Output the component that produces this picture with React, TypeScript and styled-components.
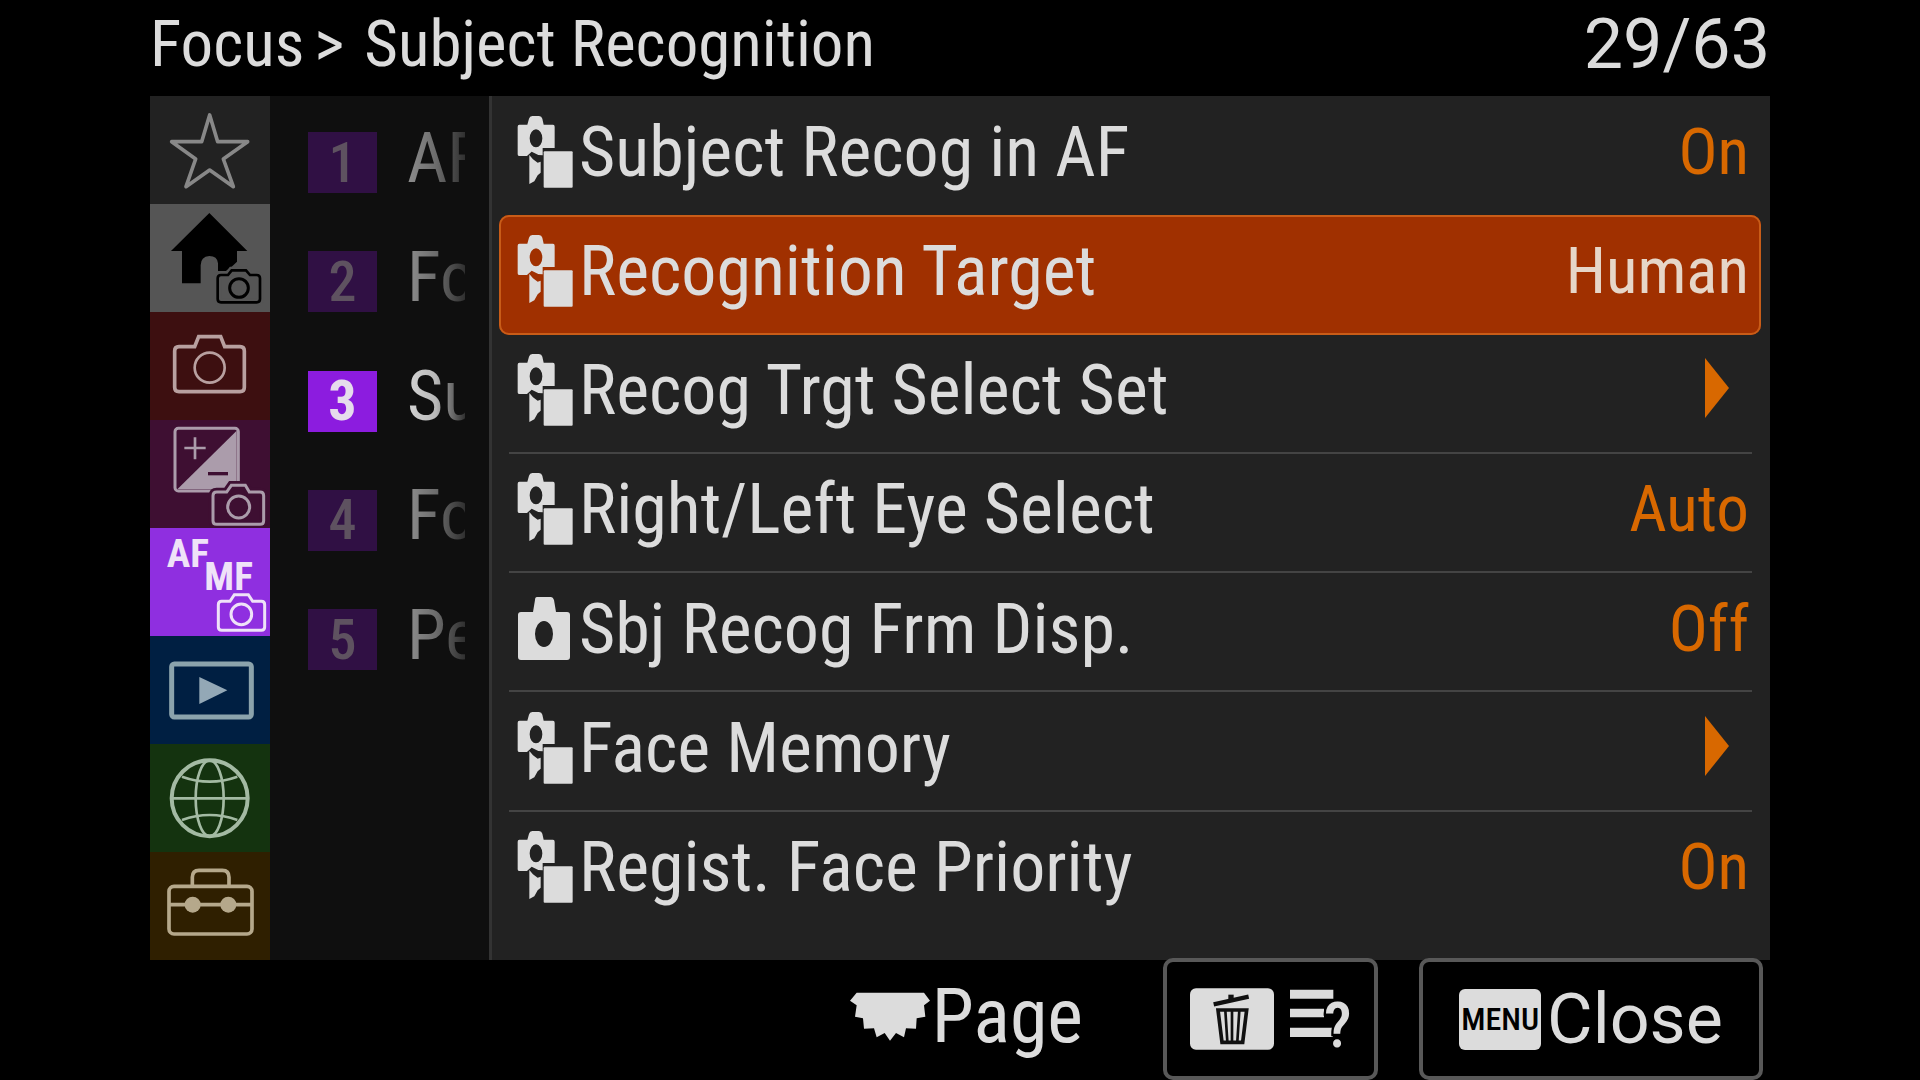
import React, { useState } from "react";
import styled, { createGlobalStyle, css } from "styled-components";

const color = {
  text: "#dcdcdc",
  accent: "#d86800",
  panel: "#222222",
  column: "#0f0f0f",
  rule: "#444444",
  frame: "#585858",
};

const GlobalStyle = createGlobalStyle`
  *, *::before, *::after { box-sizing: border-box; }
  body { margin: 0; background: #000; }
  button { margin: 0; padding: 0; border: 0; background: none; color: inherit; font: inherit; text-align: left; cursor: pointer; }
  ul, ol { margin: 0; padding: 0; list-style: none; }
  svg { display: block; flex: none; }
`;

const Screen = styled.div`
  display: flex;
  flex-direction: column;
  min-height: 100vh;
  padding: 0 150px;
  overflow: hidden;
  background: #000;
  color: ${color.text};
  font-family: "Roboto Condensed", Roboto, "Liberation Sans", sans-serif;
  font-size: 70px;
  line-height: 80px;
`;

const Header = styled.header`
  display: flex;
  align-items: center;
  justify-content: space-between;
  height: 96px;
  padding-bottom: 8px;
`;

const Crumbs = styled.h1`
  display: flex;
  align-items: center;
  margin: 0;
  font-size: 65px;
  font-weight: 400;
  white-space: nowrap;
`;

const Chevron = styled.span`
  padding: 0 20px 0 10px;
`;

const Counter = styled.span`
  font-family: Roboto, sans-serif;
  font-size: 70px;
`;

const Main = styled.main`
  display: flex;
  flex: 1;
`;

const Categories = styled.nav`
  display: flex;
  flex-direction: column;
  flex: none;
  width: 120px;
`;

const Category = styled.button<{ $bg: string }>`
  display: flex;
  flex: 1;
  background: ${(p) => p.$bg};
  svg { width: 100%; height: 108px; }
`;

const Groups = styled.ol`
  display: grid;
  grid-template-rows: repeat(7, 1fr);
  flex: none;
  width: 219px;
  padding: 7px 0 22px 38px;
  background: ${color.column};
`;

const Group = styled.button`
  display: flex;
  align-items: center;
  gap: 30px;
  width: 100%;
  height: 100%;
`;

const Badge = styled.span<{ $active: boolean }>`
  display: grid;
  place-items: center;
  width: 69px;
  height: 61px;
  font-size: 56px;
  line-height: 60px;
  font-weight: ${(p) => (p.$active ? 700 : 500)};
  color: ${(p) => (p.$active ? "#e6dcec" : "#5e5260")};
  background: ${(p) => (p.$active ? "#8c1cdf" : "#301044")};
`;

const GroupName = styled.span<{ $active: boolean }>`
  width: 58px;
  padding-bottom: 10px;
  overflow: hidden;
  color: transparent;
  background: linear-gradient(90deg, ${(p) => (p.$active ? "#d4d4d4, #b8b8b8 50%" : "#8e8e8e, #6c6c6c 50%")}, #303030 100%);
  background-clip: text;
`;

const Settings = styled.ul`
  display: flex;
  flex-direction: column;
  flex: 1;
  min-width: 0;
  padding: 0 9px 29px 7px;
  border-left: 3px solid #333;
  background: ${color.panel};
`;

const Item = styled.li<{ $selected: boolean; $rule: boolean }>`
  display: flex;
  flex: 1;
  ${(p) =>
    p.$selected
      ? css`
          border-radius: 10px;
          background: #a03000;
          box-shadow: inset 0 0 0 2px #c85c18;
          padding: 0 12px 2px 18px;
        `
      : css`
          margin: 0 9px 0 10px;
          padding: 0 3px 0 8px;
          border: solid ${p.$rule ? color.rule : "transparent"};
          border-width: 0 0 2px;
        `}
`;

const ItemButton = styled.button`
  display: flex;
  align-items: center;
  gap: 6px;
  width: 100%;
  padding-bottom: 6px;
`;

const Label = styled.span`
  flex: 1;
  white-space: nowrap;
`;

const Value = styled.span<{ $selected: boolean }>`
  font-size: 65px;
  color: ${(p) => (p.$selected ? "#e6d6c8" : color.accent)};
`;

const Arrow = styled.svg`
  width: 24px;
  height: 60px;
  margin: 0 20px 4px 0;
  fill: ${color.accent};
`;

const Footer = styled.footer`
  display: flex;
  align-items: stretch;
  justify-content: flex-end;
  height: 122px;
  margin-top: -2px;
  padding-right: 7px;
  font-size: 76px;
`;

const Page = styled.div`
  display: flex;
  align-items: center;
  gap: 2px;
  margin-right: 80px;
  padding-bottom: 6px;
`;

const FooterButton = styled.button<{ $wide?: boolean }>`
  display: flex;
  align-items: center;
  justify-content: center;
  gap: ${(p) => (p.$wide ? 6 : 16)}px;
  width: ${(p) => (p.$wide ? 344 : 215)}px;
  margin-left: ${(p) => (p.$wide ? 41 : 0)}px;
  border: 4px solid ${color.frame};
  border-radius: 10px;
  background: #000;
`;

const MenuKey = styled.span`
  display: grid;
  place-items: center;
  width: 82px;
  height: 61px;
  border-radius: 6px;
  background: ${color.text};
  color: #000;
  font-size: 32px;
  line-height: 60px;
  font-weight: 500;
`;

const CloseText = styled.span`
  font-family: Roboto, sans-serif;
  font-size: 70px;
`;

const StarIcon = () => (
  <svg viewBox="30 18 360 324" fill="none" stroke="#888" strokeWidth="11" strokeLinejoin="round" aria-hidden="true">
    <path d="M209 75 L233 155 H323 L250 207 L280 290 L209 240 L138 290 L167 207 L95 155 H185 Z" />
  </svg>
);

const HomeIcon = () => (
  <svg viewBox="30 342 360 324" aria-hidden="true">
    <path d="M208 369 L322 483 H291 V515 L275 530 L258 543 H234 V520 Q232 498 208 498 Q182 500 182 526 V580 H126 V483 H93 Z" fill="#000" />
    <path d="M243 555 H264 L275 541 H318 L330 555 H350 Q360 555 360 565 V627 Q360 637 350 637 H243 Q233 637 233 627 V565 Q233 555 243 555 Z" fill="#555" stroke="#555" strokeWidth="22" />
    <path d="M243 555 H264 L275 541 H318 L330 555 H350 Q360 555 360 565 V627 Q360 637 350 637 H243 Q233 637 233 627 V565 Q233 555 243 555 Z" fill="none" stroke="#000" strokeWidth="8" />
    <circle cx="297" cy="594" r="28" fill="none" stroke="#000" strokeWidth="9" />
  </svg>
);

const CameraIcon = () => (
  <svg viewBox="30 666 360 324" fill="none" stroke="#b8a0a0" strokeWidth="11" aria-hidden="true">
    <path d="M117 770 H164 L176 740 H242 L254 770 H300 Q313 770 313 783 V892 Q313 905 300 905 H117 Q104 905 104 892 V783 Q104 770 117 770 Z" />
    <circle cx="209" cy="833" r="45" strokeWidth="8" />
  </svg>
);

const ExposureIcon = () => (
  <svg viewBox="30 30 360 324" fill="none" stroke="#ab9cab" strokeWidth="9" aria-hidden="true">
    <rect x="105" y="55" width="190" height="188" rx="10" />
    <path d="M290 62 V238 H112 Z" fill="#ab9cab" stroke="none" />
    <path d="M133 114 H197 M165 82 V148" strokeWidth="8" />
    <path d="M204 191 H264" stroke="#3e0f32" strokeWidth="10" />
    <path d="M230 246 H260 L274 226 H316 L328 246 H360 Q371 246 371 257 V332 Q371 343 360 343 H230 Q219 343 219 332 V257 Q219 246 230 246 Z" fill="#3e0f32" stroke="#3e0f32" strokeWidth="26" />
    <path d="M230 246 H260 L274 226 H316 L328 246 H360 Q371 246 371 257 V332 Q371 343 360 343 H230 Q219 343 219 332 V257 Q219 246 230 246 Z" strokeWidth="9" />
    <circle cx="296" cy="291" r="33" />
  </svg>
);

const FocusIcon = () => (
  <svg viewBox="30 354 360 324" aria-hidden="true">
    <g fill="#efe2f8" fontWeight="700" fontSize="118">
      <text x="80" y="470">AF</text>
      <text x="193" y="539">MF</text>
    </g>
    <g fill="none" stroke="#efe2f8" strokeWidth="9">
      <path d="M245 574 H270 L283 554 H325 L338 574 H364 Q374 574 374 584 V651 Q374 661 364 661 H245 Q235 661 235 651 V584 Q235 574 245 574 Z" />
      <circle cx="304" cy="613" r="31" />
    </g>
  </svg>
);

const PlaybackIcon = () => (
  <svg viewBox="30 18 360 324" aria-hidden="true">
    <rect x="95" y="102" width="239" height="159" rx="8" fill="none" stroke="#8ba3ac" strokeWidth="15" />
    <path d="M178 141 L262 181 L178 222 Z" fill="#93a8b6" />
  </svg>
);

const NetworkIcon = () => (
  <svg viewBox="30 342 360 324" fill="none" stroke="#a3baa3" strokeWidth="8" aria-hidden="true">
    <circle cx="209" cy="505" r="114" strokeWidth="12" />
    <ellipse cx="209" cy="505" rx="42" ry="114" />
    <path d="M94 505 H324 M126 440 Q209 470 292 440 M126 570 Q209 540 292 570" />
  </svg>
);

const ToolboxIcon = () => (
  <svg viewBox="30 666 360 324" fill="none" stroke="#b5a88b" strokeWidth="11" aria-hidden="true">
    <rect x="87" y="769" width="249" height="143" rx="15" />
    <path d="M157 769 V742 Q157 721 177 721 H247 Q267 721 267 742 V769 M87 824 H336" />
    <g fill="#b5a88b" stroke="none">
      <circle cx="158" cy="824" r="24" />
      <circle cx="265" cy="824" r="24" />
    </g>
  </svg>
);

const StillMovieIcon = () => (
  <svg width="56" height="72" viewBox="20 20 168 216" fill={color.text} aria-hidden="true">
    <path
      fillRule="evenodd"
      d="M66 20 H86 Q94 20 96 28 L100 46 H128 Q133 46 133 52 V116 H97 V138 L84 137 L64 127 L50 140 H26 Q22 140 22 135 V52 Q22 46 27 46 H51 L56 28 Q58 20 66 20 Z M77 60 A19 27 0 1 0 77 114 A19 27 0 1 0 77 60 Z"
    />
    <path d="M57 137 L68 150 L82 160 L91 157 V190 L82 198 L72 216 L57 224 Z" />
    <rect x="100" y="126" width="87" height="109" rx="3" />
  </svg>
);

const StillIcon = () => (
  <svg width="56" height="64" viewBox="0 0 56 64" fill={color.text} aria-hidden="true">
    <path
      fillRule="evenodd"
      d="M20 0 H34 Q36 0 37 3 L39 15 H50 Q53 15 53 18 V60 Q53 63 50 63 H4 Q1 63 1 60 V18 Q1 15 4 15 H16 L18 3 Q18 0 20 0 Z M27 24 A9 13 0 1 0 27 50 A9 13 0 1 0 27 24 Z"
    />
  </svg>
);

const DialIcon = () => (
  <svg width="80" height="49" viewBox="16 34 240 147" fill={color.text} aria-hidden="true">
    <path d="M36 36 H238 L256 60 L238 74 L242 108 L216 113 L214 144 L184 143 L178 170 L154 157 L136 180 L120 157 L96 170 L88 143 L58 144 L55 113 L31 108 L36 74 L16 60 Z" />
  </svg>
);

const TrashKeyIcon = () => (
  <svg width="84" height="62" viewBox="22 23 252 186" aria-hidden="true">
    <rect x="22" y="24" width="252" height="184" rx="18" fill={color.text} />
    <g fill="none" stroke="#111">
      <path d="M93 72 L198 49" strokeWidth="13" />
      <path d="M145 60 V43" strokeWidth="16" />
      <path d="M106 89 H192 L180 186 H118 Z" strokeWidth="11" />
      <path d="M128 90 L134 184 M148 90 V184 M170 90 L164 184" strokeWidth="8" />
    </g>
  </svg>
);

const HelpListIcon = () => (
  <svg width="62" height="60" viewBox="320 34 186 180" aria-hidden="true">
    <path d="M320 36 H450 V63 H320 Z M320 93 H422 V119 H320 Z M320 150 H448 V178 H320 Z" fill={color.text} />
    <text x="422" y="208" fontSize="190" fontWeight="500" fill={color.text} stroke="#000" strokeWidth="14" paintOrder="stroke">?</text>
  </svg>
);

const categories = [
  { name: "My Menu", bg: "#222222", Icon: StarIcon },
  { name: "Main", bg: "#555555", Icon: HomeIcon },
  { name: "Shooting", bg: "#3d0f10", Icon: CameraIcon },
  { name: "Exposure/Color", bg: "#3e0f32", Icon: ExposureIcon },
  { name: "Focus", bg: "#8f2fe0", Icon: FocusIcon },
  { name: "Playback", bg: "#001f42", Icon: PlaybackIcon },
  { name: "Network", bg: "#14330f", Icon: NetworkIcon },
  { name: "Setup", bg: "#2f1f00", Icon: ToolboxIcon },
];

const groups = ["AF", "Fo", "Su", "Fo", "Pe"];

const settings = [
  { label: "Subject Recog in AF", value: "On" },
  { label: "Recognition Target", value: "Human" },
  { label: "Recog Trgt Select Set" },
  { label: "Right/Left Eye Select", value: "Auto" },
  { label: "Sbj Recog Frm Disp.", value: "Off", still: true },
  { label: "Face Memory" },
  { label: "Regist. Face Priority", value: "On" },
];

export default function App() {
  const [selected, setSelected] = useState(1);
  const [group, setGroup] = useState(2);

  return (
    <>
      <GlobalStyle />
      <Screen>
        <Header>
          <Crumbs>
            Focus<Chevron>&gt;</Chevron>Subject Recognition
          </Crumbs>
          <Counter>29/63</Counter>
        </Header>
        <Main>
          <Categories aria-label="Menu tabs">
            {categories.map(({ name, bg, Icon }) => (
              <Category key={name} $bg={bg} aria-label={name}>
                <Icon />
              </Category>
            ))}
          </Categories>
          <Groups>
            {groups.map((name, i) => (
              <li key={i}>
                <Group onClick={() => setGroup(i)}>
                  <Badge $active={i === group}>{i + 1}</Badge>
                  <GroupName $active={i === group}>{name}</GroupName>
                </Group>
              </li>
            ))}
          </Groups>
          <Settings>
            {settings.map((s, i) => (
              <Item
                key={s.label}
                $selected={i === selected}
                $rule={i !== selected - 1 && i < settings.length - 1}
              >
                <ItemButton onClick={() => setSelected(i)}>
                  {s.still ? <StillIcon /> : <StillMovieIcon />}
                  <Label>{s.label}</Label>
                  {s.value ? (
                    <Value $selected={i === selected}>{s.value}</Value>
                  ) : (
                    <Arrow viewBox="0 0 24 60" aria-hidden="true">
                      <path d="M0 0 L24 30 L0 60 Z" />
                    </Arrow>
                  )}
                </ItemButton>
              </Item>
            ))}
          </Settings>
        </Main>
        <Footer>
          <Page>
            <DialIcon />
            Page
          </Page>
          <FooterButton aria-label="Help">
            <TrashKeyIcon />
            <HelpListIcon />
          </FooterButton>
          <FooterButton $wide>
            <MenuKey>MENU</MenuKey>
            <CloseText>Close</CloseText>
          </FooterButton>
        </Footer>
      </Screen>
    </>
  );
}
